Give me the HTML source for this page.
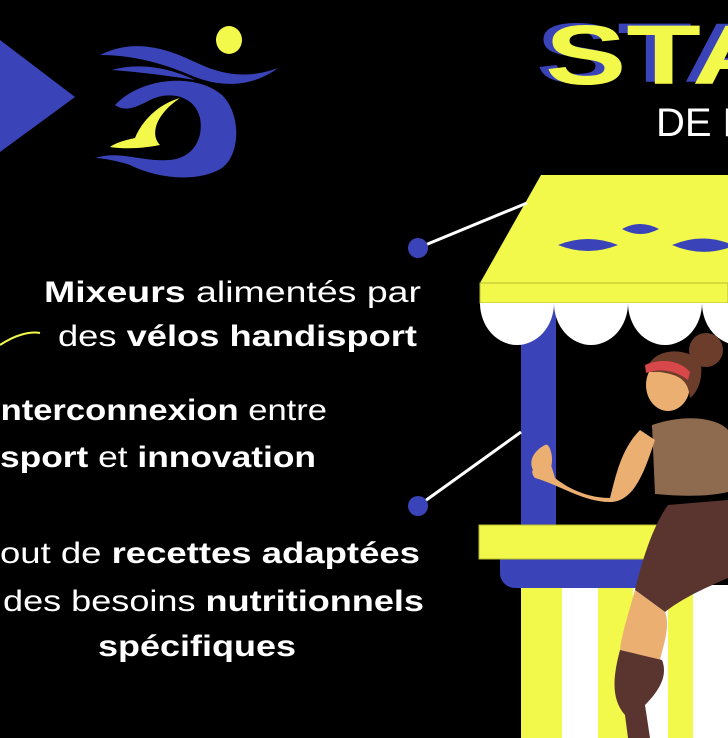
<!DOCTYPE html>
<html><head><meta charset="utf-8"><style>
html,body{margin:0;padding:0;background:#000;width:728px;height:738px;overflow:hidden}
svg{display:block}
text{font-family:"Liberation Sans",sans-serif;fill:#fff}
.b{font-weight:bold}
</style></head><body>
<svg width="728" height="738" viewBox="0 0 728 738" xmlns="http://www.w3.org/2000/svg">
<rect width="728" height="738" fill="#000"/>
<polygon points="0,40 75,97 0,152" fill="#3a44b8"/>
<ellipse cx="229" cy="40" rx="13" ry="14" fill="#f2f94a"/>
<path d="M100,55 C130,40 160,45 195,62 C220,74 245,80 278,68 C255,85 225,90 190,75 C160,62 130,55 100,55Z" fill="#3a44b8"/>
<path d="M112,70 C140,62 170,68 195,80 C170,76 140,72 112,70Z" fill="#3a44b8"/>
<path d="M115,105 C140,78 195,72 222,95 C242,115 240,155 222,168 C200,182 160,180 130,165 C115,160 100,158 95,158 C120,150 140,162 170,160 C192,158 204,140 200,118 C195,96 170,90 150,100 C135,108 125,112 115,105Z" fill="#3a44b8"/>
<path d="M180,98 C155,105 140,125 135,138 C125,140 115,143 110,147 C130,150 150,147 160,145 C150,135 155,115 180,98Z" fill="#f2f94a"/>
<text x="536" y="82" font-size="84" class="b" style="fill:#3a44b8" textLength="235" lengthAdjust="spacingAndGlyphs">STA</text>
<text x="545" y="84" font-size="84" class="b" style="fill:#f2f94a" textLength="235" lengthAdjust="spacingAndGlyphs">STA</text>
<text x="656" y="136" font-size="40">DE FR</text>
<polygon points="541,175 728,175 728,283 480,283" fill="#f2f94a"/>
<rect x="480" y="283" width="248" height="20" fill="#f2f94a" stroke="#b8bc30" stroke-width="1"/>
<path d="M558,245 Q588,233 618,245 Q588,257 558,245Z" fill="#3a44b8"/>
<path d="M622,229 Q640,219 659,229 Q640,239 622,229Z" fill="#3a44b8"/>
<path d="M672,245 Q700,233 728,243 L728,248 Q700,257 672,245Z" fill="#3a44b8"/>
<rect x="521" y="303" width="35" height="225" fill="#3a44b8"/>
<path d="M480,303 h74 a37,42 0 0 1 -74,0Z M554,303 h74 a37,42 0 0 1 -74,0Z M628,303 h74 a37,42 0 0 1 -74,0Z M702,303 h74 a37,42 0 0 1 -74,0Z" fill="#fff"/>
<rect x="521" y="585" width="41" height="153" fill="#f2f94a"/>
<rect x="562" y="585" width="36" height="153" fill="#fff"/>
<rect x="598" y="585" width="35" height="153" fill="#f2f94a"/>
<rect x="633" y="585" width="35" height="153" fill="#fff"/>
<rect x="668" y="585" width="25" height="153" fill="#f2f94a"/>
<rect x="693" y="585" width="35" height="153" fill="#fff"/>
<path d="M500,558 h150 v30 h-135 a15,15 0 0 1 -15,-15Z" fill="#3a44b8"/>
<rect x="479" y="525" width="186" height="34" fill="#f2f94a" stroke="#b8bc30" stroke-width="1"/>
<path d="M668,505 C650,530 640,570 635,590 L665,612 C680,600 700,590 728,578 L728,500Z" fill="#5a3530"/>
<path d="M635,590 C628,615 620,640 620,652 L660,660 C665,640 670,625 665,612Z" fill="#ecaf72"/>
<path d="M620,650 C612,680 612,700 625,715 L628,738 L650,738 L645,705 C660,690 668,675 662,660Z" fill="#5a3530"/>
<path d="M652,425 C690,412 720,420 728,430 L728,492 C710,496 690,497 655,494Z" fill="#8e6a4e"/>
<path d="M640,430 C620,450 615,480 610,498 C590,498 570,490 555,478 C548,450 540,455 545,470 C535,465 528,470 535,478 C560,485 585,503 612,502 C635,500 645,470 655,440Z" fill="#ecaf72"/>
<path d="M545,445 C550,442 555,460 550,470 L533,470 C528,460 535,450 545,445Z" fill="#ecaf72"/>
<ellipse cx="668" cy="385" rx="22" ry="26" fill="#ecaf72"/>
<path d="M646,372 C650,350 680,345 700,360 C705,380 695,395 690,398 C688,380 680,375 660,372Z" fill="#6b3d2a"/>
<circle cx="706" cy="350" r="17" fill="#6b3d2a"/>
<path d="M645,365 C660,358 680,360 690,372 L688,380 C675,370 660,368 646,373Z" fill="#d8474a"/>
<line x1="418" y1="248" x2="527" y2="203" stroke="#fff" stroke-width="3"/>
<circle cx="418" cy="248" r="10" fill="#3a44b8"/>
<line x1="418" y1="506" x2="521" y2="432" stroke="#fff" stroke-width="3"/>
<circle cx="418" cy="506" r="10" fill="#3a44b8"/>
<path d="M0,345 C15,335 30,331 40,333" stroke="#f2f94a" stroke-width="2" fill="none"/>
<g font-size="30">
<text x="44" y="302" textLength="377" lengthAdjust="spacingAndGlyphs"><tspan class="b">Mixeurs</tspan> alimentés par</text>
<text x="58" y="346" textLength="359" lengthAdjust="spacingAndGlyphs">des <tspan class="b">vélos handisport</tspan></text>
<text x="-9" y="420" textLength="336" lengthAdjust="spacingAndGlyphs"><tspan class="b">Interconnexion</tspan> entre</text>
<text x="0" y="467" textLength="316" lengthAdjust="spacingAndGlyphs"><tspan class="b">sport</tspan> et <tspan class="b">innovation</tspan></text>
<text x="0" y="563" textLength="420" lengthAdjust="spacingAndGlyphs">out de <tspan class="b">recettes adaptées</tspan></text>
<text x="3" y="611" textLength="421" lengthAdjust="spacingAndGlyphs">des besoins <tspan class="b">nutritionnels</tspan></text>
<text x="98" y="656" class="b" textLength="198" lengthAdjust="spacingAndGlyphs">spécifiques</text>
</g>
</svg>
</body></html>
